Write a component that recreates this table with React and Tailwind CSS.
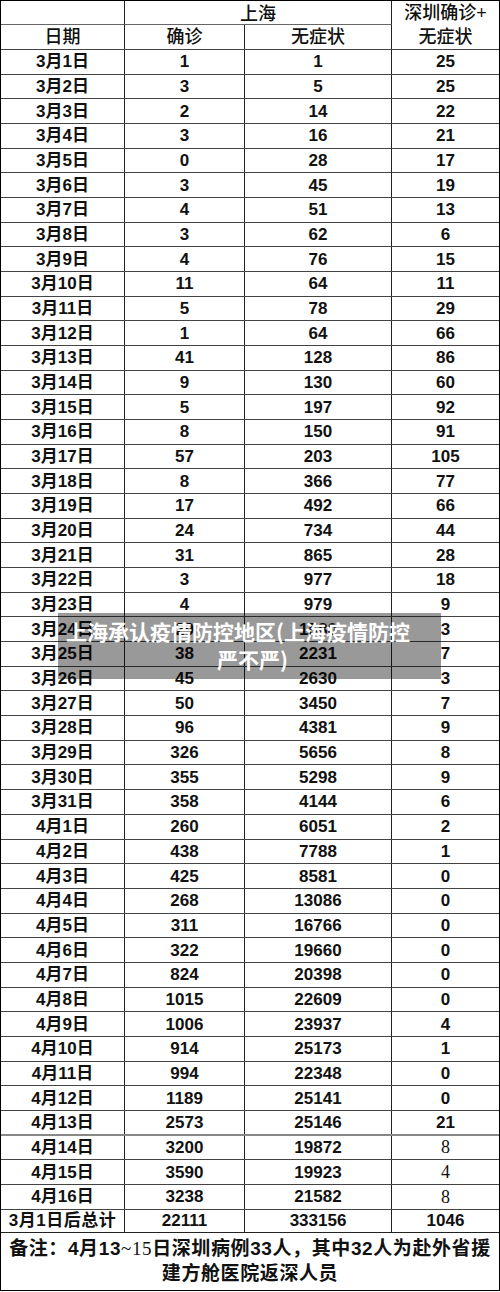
const rows = [
  ['3月1日', '1', '1', '25'],
  ['3月2日', '3', '5', '25'],
  ['3月3日', '2', '14', '22'],
  ['3月4日', '3', '16', '21'],
  ['3月5日', '0', '28', '17'],
  ['3月6日', '3', '45', '19'],
  ['3月7日', '4', '51', '13'],
  ['3月8日', '3', '62', '6'],
  ['3月9日', '4', '76', '15'],
  ['3月10日', '11', '64', '11'],
  ['3月11日', '5', '78', '29'],
  ['3月12日', '1', '64', '66'],
  ['3月13日', '41', '128', '86'],
  ['3月14日', '9', '130', '60'],
  ['3月15日', '5', '197', '92'],
  ['3月16日', '8', '150', '91'],
  ['3月17日', '57', '203', '105'],
  ['3月18日', '8', '366', '77'],
  ['3月19日', '17', '492', '66'],
  ['3月20日', '24', '734', '44'],
  ['3月21日', '31', '865', '28'],
  ['3月22日', '3', '977', '18'],
  ['3月23日', '4', '979', '9'],
  ['3月24日', '29', '1580', '3'],
  ['3月25日', '38', '2231', '7'],
  ['3月26日', '45', '2630', '3'],
  ['3月27日', '50', '3450', '7'],
  ['3月28日', '96', '4381', '9'],
  ['3月29日', '326', '5656', '8'],
  ['3月30日', '355', '5298', '9'],
  ['3月31日', '358', '4144', '6'],
  ['4月1日', '260', '6051', '2'],
  ['4月2日', '438', '7788', '1'],
  ['4月3日', '425', '8581', '0'],
  ['4月4日', '268', '13086', '0'],
  ['4月5日', '311', '16766', '0'],
  ['4月6日', '322', '19660', '0'],
  ['4月7日', '824', '20398', '0'],
  ['4月8日', '1015', '22609', '0'],
  ['4月9日', '1006', '23937', '4'],
  ['4月10日', '914', '25173', '1'],
  ['4月11日', '994', '22348', '0'],
  ['4月12日', '1189', '25141', '0'],
  ['4月13日', '2573', '25146', '21', 'thick'],
  ['4月14日', '3200', '19872', '8', 'serif'],
  ['4月15日', '3590', '19923', '4', 'serif'],
  ['4月16日', '3238', '21582', '8', 'serif'],
]

const cols = 'grid grid-cols-[124px_120px_147px_1fr]'
const cell = 'flex items-center justify-center border-r border-[#222]'

function Row({ r }) {
  const [date, a, b, c, flag] = r
  const line = flag === 'thick' ? 'border-b-2 border-b-[#888]' : 'border-b border-b-[#444]'
  return (
    <div className={`${cols} h-[24.68px] ${line} text-[17px] font-bold leading-none`}>
      <div className={cell}>{date}</div>
      <div className={cell}>{a}</div>
      <div className={cell}>{b}</div>
      <div className={`flex items-center justify-center ${flag === 'serif' ? "font-['Liberation_Serif'] text-[18px] font-normal" : ''}`}>
        {c}
      </div>
    </div>
  )
}

export default function App() {
  return (
    <div className="relative w-[500px] border border-black bg-white text-[#111] font-['Liberation_Sans','Noto_Sans_CJK_SC',sans-serif]">
      <div className={`${cols} grid-rows-[24px_24px] border-b border-[#444] text-[18px] font-medium leading-none`}>
        <div className={`${cell} border-b border-b-[#666]`} />
        <div className="col-span-2 flex items-center justify-center border-r border-b border-[#222] border-b-[#666] pt-0.5">上海</div>
        <div className="row-span-2 flex flex-col items-center justify-center gap-1.5">
          <span>深圳确诊+</span>
          <span>无症状</span>
        </div>
        <div className={cell}>日期</div>
        <div className={cell}>确诊</div>
        <div className={cell}>无症状</div>
      </div>

      {rows.map((r) => (
        <Row key={r[0]} r={r} />
      ))}

      <div className={`${cols} h-[23px] border-b border-b-[#222] text-[17px] font-bold leading-none`}>
        <div className={`${cell} tracking-[0.5px]`}>3月1日后总计</div>
        <div className={cell}>22111</div>
        <div className={cell}>333156</div>
        <div className="flex items-center justify-center">1046</div>
      </div>

      <div className="flex h-[57px] flex-col items-center pt-[3px] text-[19px] font-bold leading-[25px] tracking-[0.6px]">
        <div>
          备注：4月13<span className="font-['Liberation_Serif'] font-normal">~15</span>日深圳病例33人，其中32人为赴外省援
        </div>
        <div>建方舱医院返深人员</div>
      </div>

      <div className="absolute left-[57px] top-[612px] h-[66px] w-[383px] bg-black/40 pt-[4px] text-[21px] font-bold leading-[28px] text-white font-['Noto_Sans_CJK_SC',sans-serif]">
        <div className="pl-[8px]">上海承认疫情防控地区(上海疫情防控</div>
        <div className="pl-[6px] text-center">严不严)</div>
      </div>
    </div>
  )
}
